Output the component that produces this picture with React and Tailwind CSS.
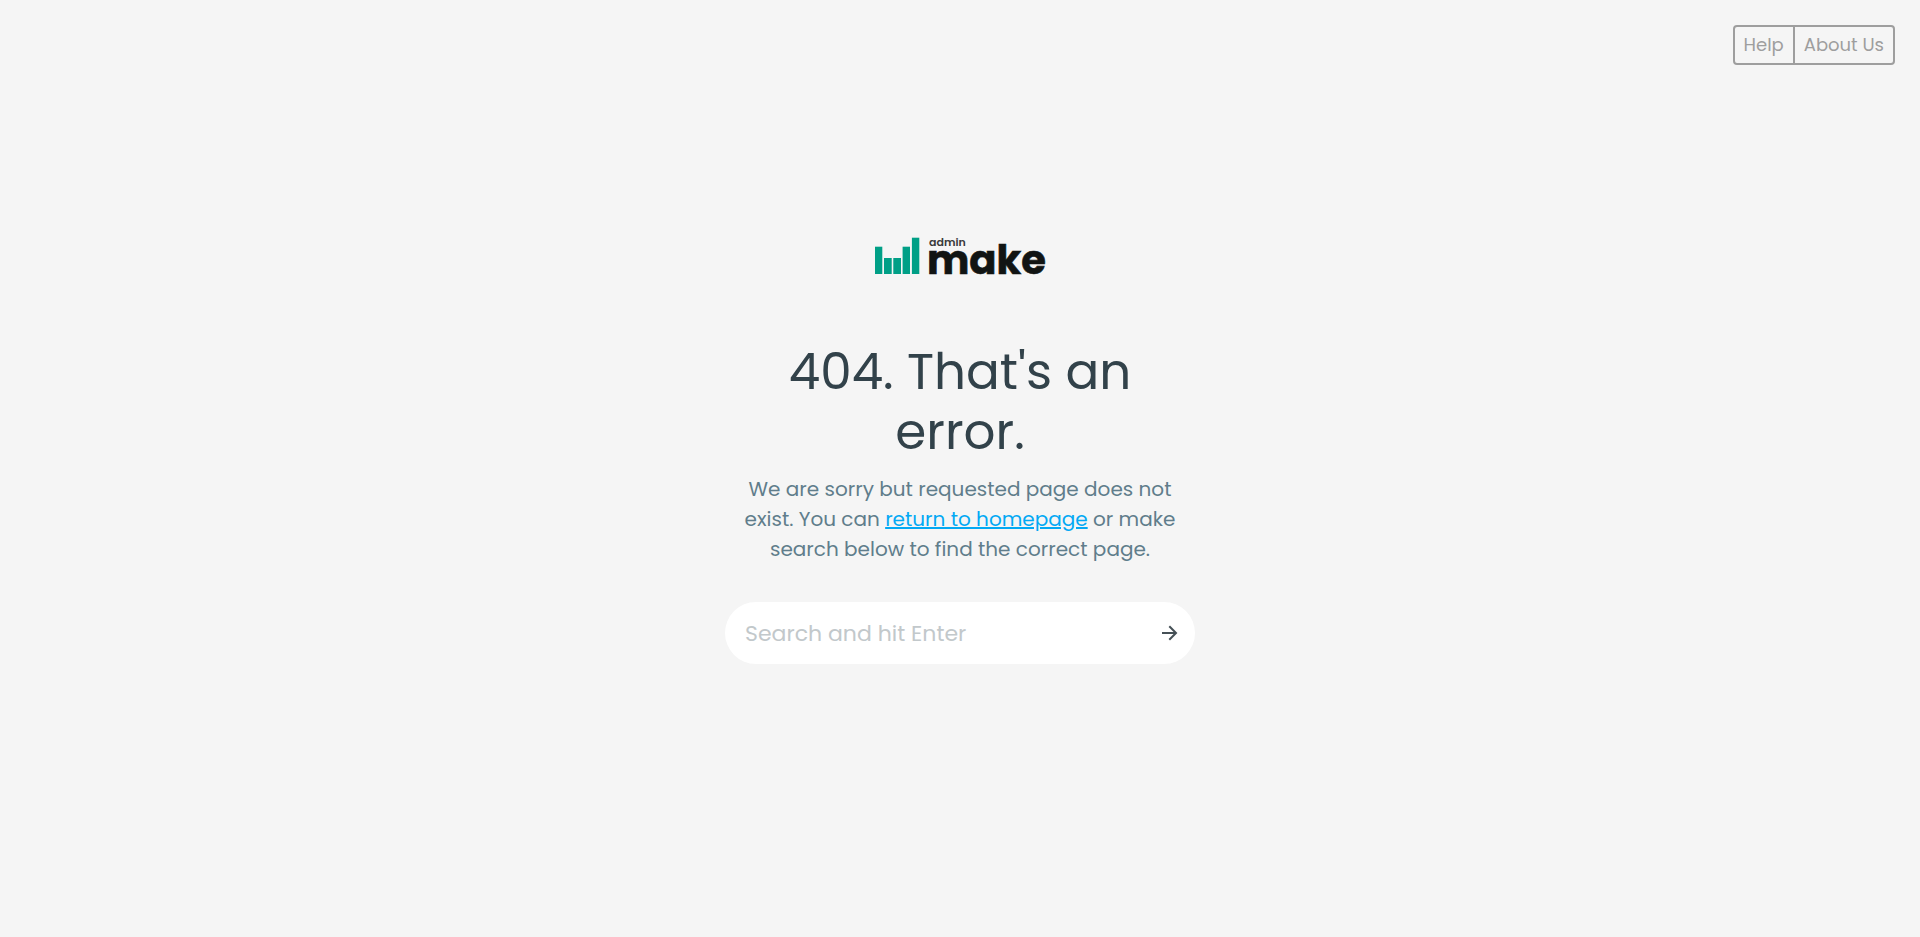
import React from "react";

function Logo() {
  return (
    <svg
      role="img"
      aria-label="admin make"
      viewBox="0 0 170 40"
      className="h-10 w-[170px] overflow-visible"
    >
      <g fill="#009f86">
        <rect x="0" y="9.7" width="7.3" height="27.3" />
        <rect x="9" y="21" width="7.7" height="16" />
        <rect x="18.3" y="21" width="7.7" height="16" />
        <rect x="27.6" y="9.7" width="7.4" height="27.3" />
        <rect x="36.9" y="0.7" width="7.4" height="36.3" />
      </g>
      <text x="54" y="9" fontSize="11" fontWeight="600" fill="#3a3a3a">
        admin
      </text>
      <text
        x="52"
        y="37"
        fontSize="40"
        fontWeight="700"
        fill="#111413"
        stroke="#111413"
        strokeWidth="0.6"
      >
        make
      </text>
    </svg>
  );
}

export default function App() {
  return (
    <div className="flex min-h-screen flex-col bg-[#f5f5f5] font-[Poppins,Inter,sans-serif]">
      <header className="flex justify-end p-[25px]">
        <nav className="flex divide-x-2 divide-[#9e9e9e] rounded-[4px] border-2 border-[#9e9e9e] text-lg leading-9 text-[#9e9e9e]">
          <a href="#help" className="px-[9px]">
            Help
          </a>
          <a href="#about" className="px-[9px]">
            About Us
          </a>
        </nav>
      </header>
      <main className="mx-auto flex w-full max-w-[470px] flex-col items-center pt-[147px] text-center">
        <Logo />
        <h1 className="mt-[65px] px-[50px] text-[50px] leading-[60px] text-[#32424a]">
          404. That's an error.
        </h1>
        <p className="mt-[12px] px-4 text-xl leading-[30px] text-[#607d8b]">
          We are sorry but requested page does not exist. You can{" "}
          <a href="#home" className="text-[#03a9f4] underline">
            return to homepage
          </a>{" "}
          or make search below to find the correct page.
        </p>
        <form
          role="search"
          className="mt-[38px] flex h-[62px] w-full items-center rounded-full bg-white pr-[15px] pl-5"
        >
          <input
            type="text"
            aria-label="Search and hit Enter"
            placeholder="Search and hit Enter"
            className="min-w-0 flex-1 bg-transparent text-[22px] text-[#32424a] outline-none placeholder:text-[#c2c8cb]"
          />
          <button type="submit" aria-label="Search" className="p-0">
            <svg
              viewBox="0 0 20 20"
              className="size-5"
              fill="none"
              stroke="#455056"
              strokeWidth="2"
            >
              <path d="M2 10h14M9.3 3.3 16 10l-6.7 6.7" />
            </svg>
          </button>
        </form>
      </main>
    </div>
  );
}
